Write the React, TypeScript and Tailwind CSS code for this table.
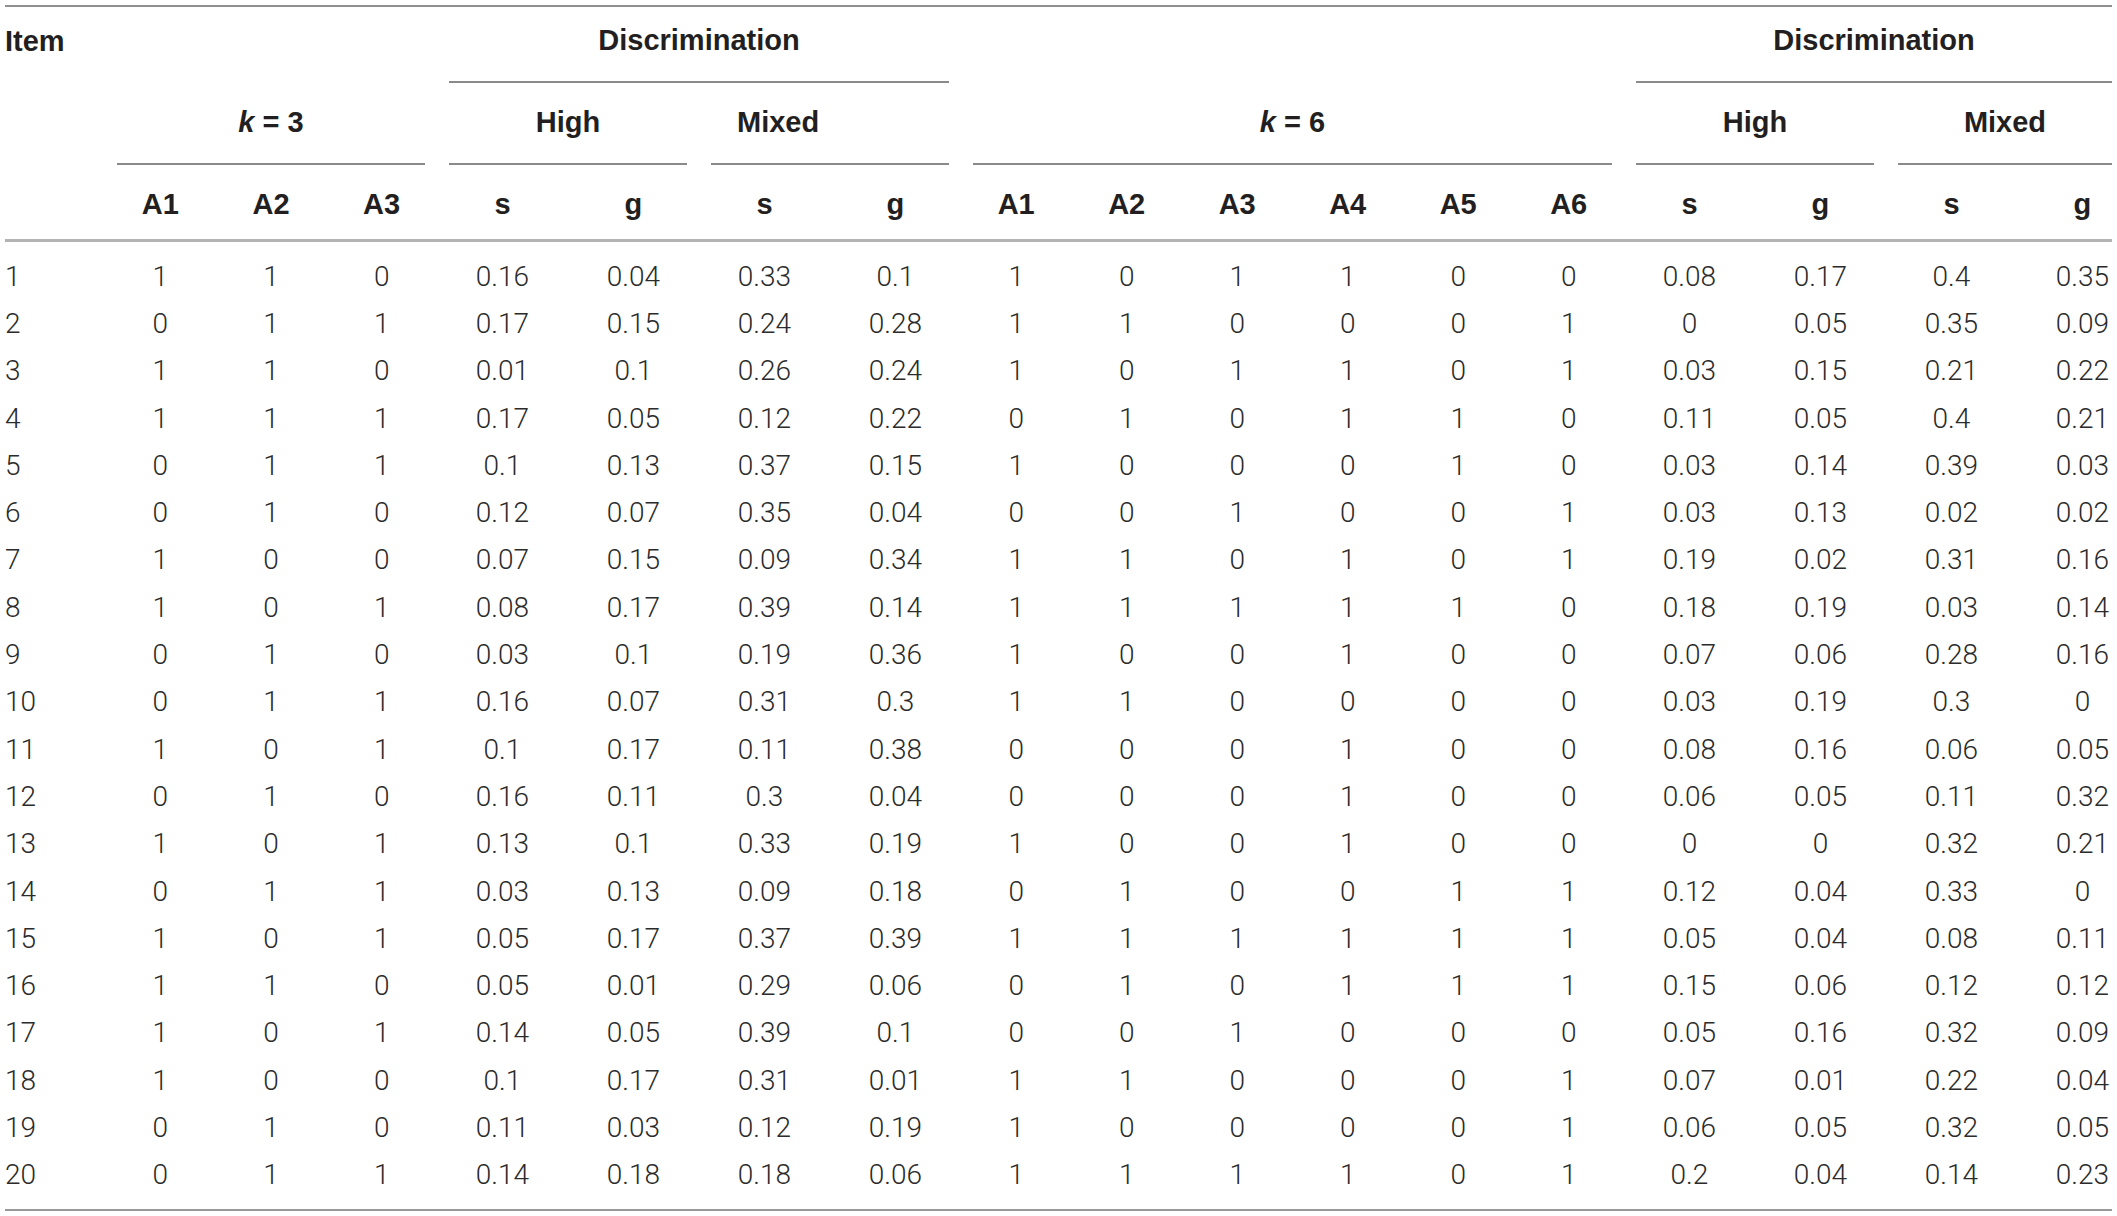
const rows = [
  '1 1 1 0 0.16 0.04 0.33 0.1 1 0 1 1 0 0 0.08 0.17 0.4 0.35',
  '2 0 1 1 0.17 0.15 0.24 0.28 1 1 0 0 0 1 0 0.05 0.35 0.09',
  '3 1 1 0 0.01 0.1 0.26 0.24 1 0 1 1 0 1 0.03 0.15 0.21 0.22',
  '4 1 1 1 0.17 0.05 0.12 0.22 0 1 0 1 1 0 0.11 0.05 0.4 0.21',
  '5 0 1 1 0.1 0.13 0.37 0.15 1 0 0 0 1 0 0.03 0.14 0.39 0.03',
  '6 0 1 0 0.12 0.07 0.35 0.04 0 0 1 0 0 1 0.03 0.13 0.02 0.02',
  '7 1 0 0 0.07 0.15 0.09 0.34 1 1 0 1 0 1 0.19 0.02 0.31 0.16',
  '8 1 0 1 0.08 0.17 0.39 0.14 1 1 1 1 1 0 0.18 0.19 0.03 0.14',
  '9 0 1 0 0.03 0.1 0.19 0.36 1 0 0 1 0 0 0.07 0.06 0.28 0.16',
  '10 0 1 1 0.16 0.07 0.31 0.3 1 1 0 0 0 0 0.03 0.19 0.3 0',
  '11 1 0 1 0.1 0.17 0.11 0.38 0 0 0 1 0 0 0.08 0.16 0.06 0.05',
  '12 0 1 0 0.16 0.11 0.3 0.04 0 0 0 1 0 0 0.06 0.05 0.11 0.32',
  '13 1 0 1 0.13 0.1 0.33 0.19 1 0 0 1 0 0 0 0 0.32 0.21',
  '14 0 1 1 0.03 0.13 0.09 0.18 0 1 0 0 1 1 0.12 0.04 0.33 0',
  '15 1 0 1 0.05 0.17 0.37 0.39 1 1 1 1 1 1 0.05 0.04 0.08 0.11',
  '16 1 1 0 0.05 0.01 0.29 0.06 0 1 0 1 1 1 0.15 0.06 0.12 0.12',
  '17 1 0 1 0.14 0.05 0.39 0.1 0 0 1 0 0 0 0.05 0.16 0.32 0.09',
  '18 1 0 0 0.1 0.17 0.31 0.01 1 1 0 0 0 1 0.07 0.01 0.22 0.04',
  '19 0 1 0 0.11 0.03 0.12 0.19 1 0 0 0 0 1 0.06 0.05 0.32 0.05',
  '20 0 1 1 0.14 0.18 0.18 0.06 1 1 1 1 0 1 0.2 0.04 0.14 0.23',
].map((r) => r.split(' '));

const cols =
  'grid grid-cols-[100px_repeat(3,110.67px)_repeat(4,131px)_repeat(6,110.5px)_repeat(4,131px)]';

const subHeads = ['A1', 'A2', 'A3', 's', 'g', 's', 'g', 'A1', 'A2', 'A3', 'A4', 'A5', 'A6', 's', 'g', 's', 'g'];

function Group({
  span,
  children,
  last,
  className = 'justify-center',
}: {
  span: string;
  children: React.ReactNode;
  last?: boolean;
  className?: string;
}) {
  return (
    <div
      className={`${span} ml-[12px] ${last ? 'mr-[36px]' : 'mr-[12px]'} flex items-center ${className} border-b-2 border-[#8a8a8a]`}
    >
      {children}
    </div>
  );
}

export default function App() {
  return (
    <div className="w-[2117px] h-[1216px] overflow-hidden bg-white pt-[5px] pl-[5px] text-[#231f20] font-['Liberation_Sans',Arial,sans-serif]">
      <div className="w-[2107px] border-t-2 border-[#8f8f8f]">
        {/* header */}
        <div className="border-b-[3px] border-[#b3b3b3]">
          <div className={`${cols} h-[76px] text-[29px] font-bold`}>
            <div className="col-start-1 flex items-center pb-[6px]">Item</div>
            <Group span="col-start-5 col-span-4" className="justify-center pb-[6px]">
              Discrimination
            </Group>
            <Group span="col-start-15 col-span-4" className="justify-center pb-[6px]" last>
              Discrimination
            </Group>
          </div>
          <div className={`${cols} h-[82px] text-[29px] font-bold`}>
            <Group span="col-start-2 col-span-3">
              <span>
                <i>k</i> = 3
              </span>
            </Group>
            <Group span="col-span-2">High</Group>
            <Group span="col-span-2" className="justify-start pl-[26px]">
              Mixed
            </Group>
            <Group span="col-span-6">
              <span>
                <i>k</i> = 6
              </span>
            </Group>
            <Group span="col-span-2">High</Group>
            <Group span="col-span-2" last>
              Mixed
            </Group>
          </div>
          <div className={`${cols} h-[74px] text-[29px] font-bold`}>
            <div />
            {subHeads.map((h, i) => (
              <div key={i} className="flex items-center justify-center pt-[5px]">
                {h}
              </div>
            ))}
          </div>
        </div>

        {/* body */}
        <div className="pt-[11px] pb-[10px] border-b-2 border-[#999999] font-['Roboto',sans-serif] font-light text-[28px] text-[#2b2b2b]">
          {rows.map((r) => (
            <div key={r[0]} className={`${cols} h-[47.3px] items-center`}>
              {r.map((v, i) => (
                <div key={i} className={i === 0 ? 'text-left' : 'text-center'}>
                  {v}
                </div>
              ))}
            </div>
          ))}
        </div>
      </div>
    </div>
  );
}
